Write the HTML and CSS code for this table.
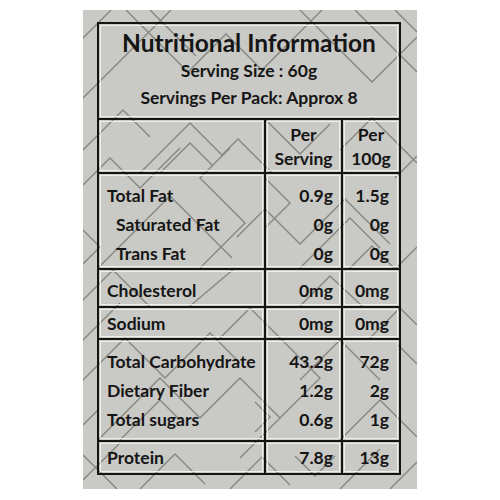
FILE: index.html
```html
<!DOCTYPE html>
<html lang="en">
<head>
<meta charset="utf-8">
<title>Nutritional Information</title>
<link rel="stylesheet" href="styles.css">
</head>
<body>
<div class="label">
  <table class="facts">
    <colgroup><col class="c1"><col class="c2"><col class="c3"></colgroup>
    <tr class="r-head">
      <td colspan="3" class="head">
        <h1 class="title">Nutritional Information</h1>
        <p class="serv">Serving Size : 60g</p>
        <p class="serv">Servings Per Pack: Approx 8</p>
      </td>
    </tr>
    <tr class="r-cols">
      <td></td>
      <td class="ch">Per<br>Serving</td>
      <td class="ch">Per<br>100g</td>
    </tr>
    <tr class="r-fat">
      <td class="name grp"><div>Total Fat</div><div class="sub">Saturated Fat</div><div class="sub">Trans Fat</div></td>
      <td class="val grp v1">0.9g<br>0g<br>0g</td>
      <td class="val grp v2">1.5g<br>0g<br>0g</td>
    </tr>
    <tr class="r-chol">
      <td class="name">Cholesterol</td>
      <td class="val v1">0mg</td>
      <td class="val v2">0mg</td>
    </tr>
    <tr class="r-sod">
      <td class="name">Sodium</td>
      <td class="val v1">0mg</td>
      <td class="val v2">0mg</td>
    </tr>
    <tr class="r-carb">
      <td class="name grp"><div>Total Carbohydrate</div><div>Dietary Fiber</div><div>Total sugars</div></td>
      <td class="val grp v1">43.2g<br>1.2g<br>0.6g</td>
      <td class="val grp v2">72g<br>2g<br>1g</td>
    </tr>
    <tr class="r-prot">
      <td class="name">Protein</td>
      <td class="val v1">7.8g</td>
      <td class="val v2">13g</td>
    </tr>
  </table>
</div>
</body>
</html>
```
FILE: styles.css
```css
html, body {
  margin: 0;
  padding: 0;
  background: #ffffff;
}

body {
  font-family: "Lato", "Liberation Sans", sans-serif;
  color: #151515;
}

.label {
  box-sizing: border-box;
  width: 334px;
  height: 479px;
  margin: 10px 0 0 83px;
  padding: 12px 0 0 14px;
  background-color: #c9c9c5;
  background-image: url("data:image/svg+xml;utf8,<svg xmlns='http://www.w3.org/2000/svg' width='334' height='479' viewBox='83 10 334 479'><g fill='none' stroke='rgb(135,135,130)' stroke-width='1.4'><path d='M83,38 L111,10'/><path d='M83,98 L171,10'/><path d='M126,10 L188,72 L226,34 L262,70 L322,10'/><path d='M150,10 L196,56'/><path d='M300,10 L372,82 L417,37'/><path d='M355,10 L417,72'/><path d='M395,10 L417,32'/><path d='M83,150 L123,110 L150,137'/><path d='M140,173 L190,123 L222,155 L238,139 L272,173'/><path d='M160,173 L190,143 L212,165'/><path d='M83,185 L110,158 L140,188 L180,148'/><path d='M98,268 L170,196 L232,258'/><path d='M200,268 L245,223 L200,178 L230,148'/><path d='M237,237 L265,209 L300,244 L345,199 L390,244'/><path d='M265,178 L290,203 L265,228'/><path d='M300,268 L350,218 L380,248'/><path d='M350,268 L372,246 L395,269 L417,247'/><path d='M395,178 L417,156'/><path d='M340,150 L372,118 L417,163'/><path d='M265,119 L300,154 L330,124'/><path d='M83,230 L100,247 L83,264'/><path d='M83,300 L113,270 L150,307'/><path d='M83,340 L120,303'/><path d='M190,306 L235,268'/><path d='M220,338 L250,308 L280,338'/><path d='M300,306 L330,276 L362,306'/><path d='M370,338 L400,308 L417,325'/><path d='M83,380 L125,338 L165,378 L210,333 L240,363'/><path d='M98,440 L160,378 L200,418 L240,378 L280,418 L240,458'/><path d='M120,440 L160,400 L180,420'/><path d='M255,402 L270,417 L255,432'/><path d='M280,338 L320,378 L280,418'/><path d='M340,440 L380,400 L417,437'/><path d='M300,380 L340,340 L380,380'/><path d='M398,345 L417,364'/><path d='M83,425 L98,410'/><path d='M83,480 L120,443'/><path d='M140,489 L175,454 L205,484'/><path d='M230,489 L262,457 L290,485'/><path d='M295,456 L315,476 L335,456'/><path d='M340,489 L380,449'/><path d='M390,489 L417,462'/><path d='M83,455 L100,472 L117,489'/></g></svg>");
}

.facts {
  border-collapse: collapse;
  table-layout: fixed;
  width: 302px;
}

.c1 { width: 167px; }
.c2 { width: 77px; }
.c3 { width: 58px; }

.facts td {
  box-sizing: border-box;
  position: relative;
  border: 2px solid #141414;
  padding: 0;
  vertical-align: top;
  font-size: 17.5px;
  font-weight: 700;
  line-height: 29px;
  white-space: nowrap;
}

.facts td::before {
  content: "";
  position: absolute;
  inset: 1px;
  border: 1px solid #eeeeea;
  pointer-events: none;
}

.r-head td { height: 96px; }
.r-cols td { height: 54px; }
.r-fat td { height: 95px; }
.r-chol td { height: 38px; }
.r-sod td { height: 32px; }
.r-carb td { height: 102px; }
.r-prot td { height: 33px; }

.facts td.head {
  text-align: center;
  padding-top: 4px;
}

.title {
  margin: 0;
  font-size: 24.5px;
  line-height: 30px;
  font-weight: 700;
}

.serv {
  margin: 0;
  font-size: 17.5px;
  line-height: 26.5px;
  font-weight: 700;
}

.facts td.ch {
  text-align: center;
  line-height: 24px;
  padding-top: 3px;
}

.facts td.name {
  padding-left: 8px;
  padding-top: 6px;
}

.name .sub {
  padding-left: 9px;
}

.facts td.val {
  text-align: right;
  padding-top: 6px;
}

.facts td.v1 { padding-right: 8px; }
.facts td.v2 { padding-right: 10px; }

.facts .r-sod td, .facts .r-prot td { padding-top: 1px; }
.facts .r-fat td, .facts .r-carb td { padding-top: 7px; }
```
